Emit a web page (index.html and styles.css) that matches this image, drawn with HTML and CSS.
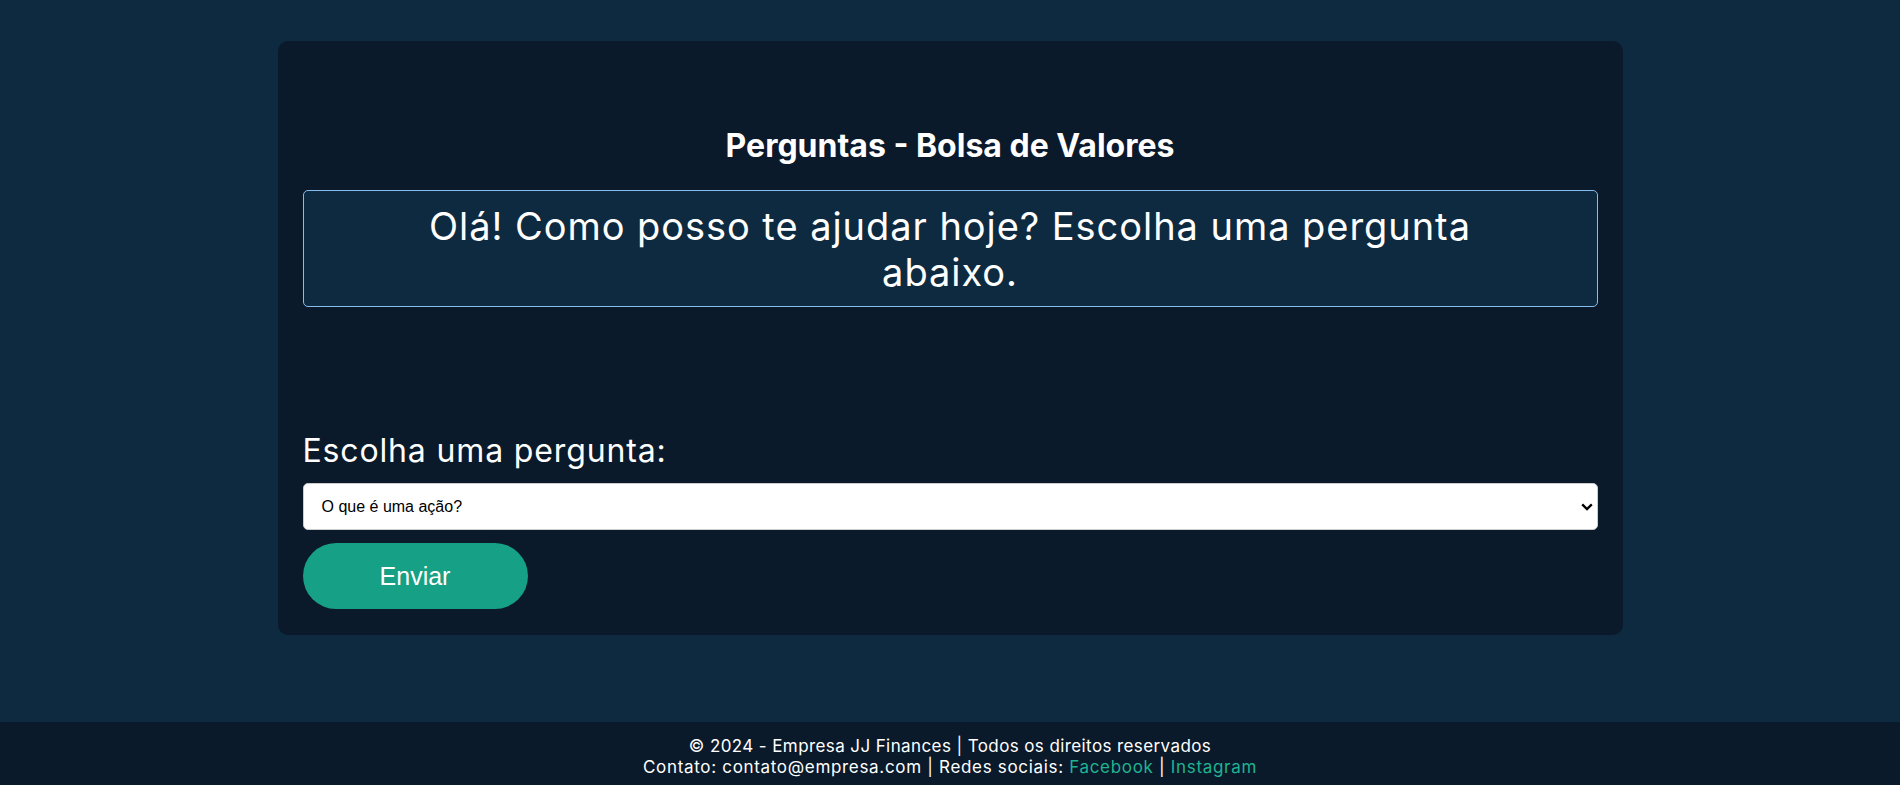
FILE: index.html
```html
<!DOCTYPE html>
<html lang="pt-BR">
<head>
<meta charset="utf-8">
<title>Perguntas - Bolsa de Valores</title>
<link rel="stylesheet" href="styles.css">
</head>
<body>
<main class="page">
  <section class="card">
    <h1 class="title">Perguntas - Bolsa de Valores</h1>
    <div class="chat">
      <p class="chat-msg">Olá! Como posso te ajudar hoje? Escolha uma pergunta<br>abaixo.</p>
    </div>
    <label class="label" for="pergunta">Escolha uma pergunta:</label>
    <div class="select-wrap">
      <select id="pergunta" class="select">
        <option>O que é uma ação?</option>
        <option>O que são dividendos?</option>
        <option>Como investir na bolsa?</option>
      </select>
      <svg class="chev" width="12" height="8" viewBox="0 0 12 8" aria-hidden="true"><path d="M1.2 1.4 L6 6 L10.8 1.4" fill="none" stroke="#000" stroke-width="2.4"/></svg>
    </div>
    <button class="btn" type="button">Enviar</button>
  </section>
</main>
<footer class="footer">
  <p class="footer-line">© 2024 - Empresa JJ Finances | Todos os direitos reservados</p>
  <p class="footer-line footer-contact">Contato: contato@empresa.com | Redes sociais: <a class="link" href="#">Facebook</a> | <a class="link" href="#">Instagram</a></p>
</footer>
</body>
</html>
```
FILE: styles.css
```css
* { box-sizing: border-box; }
html, body { margin: 0; padding: 0; }
body {
  background: #0e2a40;
  color: #ffffff;
  font-family: Inter, "Noto Sans", sans-serif;
  min-height: 100vh;
  display: flex;
  flex-direction: column;
}
.page {
  flex: 1;
  display: flex;
  justify-content: center;
  align-items: flex-start;
  padding-top: 41px;
}
.card {
  width: 1345px;
  background: #0b1a2a;
  border-radius: 10px;
  padding: 25px 25px 26px;
  display: flex;
  flex-direction: column;
  align-items: stretch;
}
.title {
  margin: 60px 0 25px;
  font-size: 32px;
  font-weight: 700;
  line-height: 39px;
  text-align: center;
  letter-spacing: 0;
}
.chat {
  background: #0e2a40;
  border: 1px solid #86bdec;
  border-radius: 5px;
  height: 117px;
  padding: 12px 10px 0;
}
.chat-msg {
  margin: 0;
  font-size: 38px;
  line-height: 46px;
  font-weight: 400;
  text-align: center;
  letter-spacing: 0.95px;
}
.label {
  display: block;
  margin-top: 124px;
  font-size: 32px;
  line-height: 39px;
  font-weight: 400;
  letter-spacing: 0.85px;
}
.select-wrap {
  position: relative;
  margin-top: 13px;
}
.select {
  display: block;
  width: 100%;
  height: 47px;
  appearance: none;
  -webkit-appearance: none;
  background: #ffffff;
  border: 1px solid #cccccc;
  border-radius: 5px;
  padding: 0 18px;
  font-family: "Liberation Sans", Arial, sans-serif;
  font-size: 16px;
  color: #000000;
}
.chev {
  position: absolute;
  right: 5px;
  top: 20px;
  pointer-events: none;
}
.btn {
  margin-top: 13px;
  align-self: flex-start;
  width: 225px;
  height: 66px;
  border: none;
  border-radius: 33px;
  background: #16a085;
  color: #ffffff;
  font-family: "Liberation Sans", Arial, sans-serif;
  font-size: 25px;
  cursor: pointer;
}
.footer {
  background: #0b1a2a;
  text-align: center;
  padding: 14px 0 8px;
}
.footer-line {
  margin: 0;
  font-size: 17px;
  line-height: 20.4px;
  letter-spacing: 0.4px;
}
.footer-contact {
  letter-spacing: 0.68px;
}
.link {
  color: #1fb392;
  text-decoration: none;
}
```
